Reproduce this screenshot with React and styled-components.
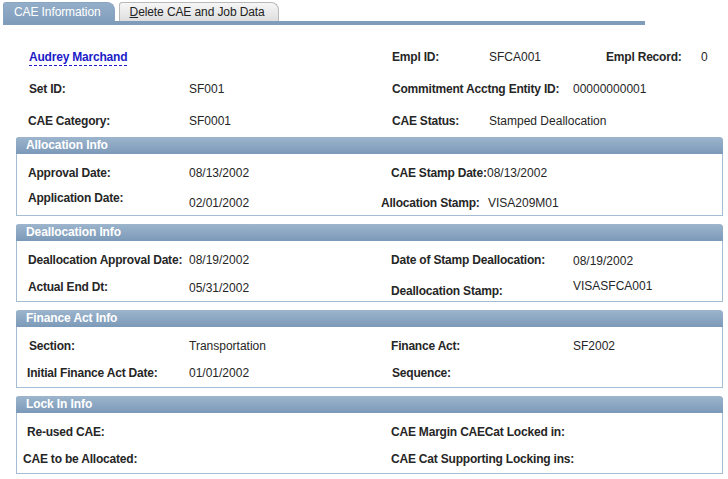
import React from "react";
import styled, { createGlobalStyle } from "styled-components";

const GlobalStyle = createGlobalStyle`
  body {
    margin: 0;
    background: #ffffff;
    font-family: Arial, "Liberation Sans", sans-serif;
    font-size: 12px;
    color: #222;
  }
`;

const Page = styled.div`
  width: 728px;
  height: 479px;
  overflow: hidden;
  background: #fff;
`;

const TabBar = styled.div`
  display: flex;
  align-items: flex-end;
  gap: 4px;
  margin-left: 3px;
  width: 642px;
  height: 21px;
  border-bottom: 4px solid #7f9dbb;
`;

const Tab = styled.div`
  height: 19px;
  box-sizing: border-box;
  padding: 0 13px 0 10px;
  display: flex;
  align-items: center;
  font-size: 12px;
  letter-spacing: -0.1px;
  border-radius: 3px 8px 0 0;
  color: ${(p) => (p.$active ? "#ffffff" : "#222")};
  background: ${(p) =>
    p.$active
      ? "linear-gradient(#93aec9, #829fbd)"
      : "linear-gradient(#f6f6f6, #dedede)"};
  border: 1px solid ${(p) => (p.$active ? "#8aa5c1" : "#b9b9b9")};
  border-bottom: none;
  & u {
    text-decoration: underline;
  }
`;

const Header = styled.div`
  padding: 16px 0 0 29px;
`;

const Row = styled.div`
  display: grid;
  grid-template-columns: ${(p) => p.$cols};
  align-items: center;
  height: ${(p) => p.$h || 27}px;
`;

const Label = styled.div`
  font-weight: bold;
  color: #262626;
  letter-spacing: -0.2px;
  white-space: nowrap;
  margin-left: ${(p) => p.$dx || 0}px;
  margin-top: ${(p) => (p.$dy || 0) * 2}px;
`;

const Value = styled.div`
  color: #262626;
  white-space: nowrap;
  margin-left: ${(p) => p.$dx || 0}px;
  margin-top: ${(p) => (p.$dy || 0) * 2}px;
`;

const NameLink = styled.a`
  font-weight: bold;
  color: #1c1cc8;
  text-decoration: none;
  border-bottom: 1px dashed #1c1cc8;
  padding-bottom: 1px;
  cursor: pointer;
`;

const Sections = styled.div`
  display: flex;
  flex-direction: column;
  gap: 8px;
  margin-left: 16px;
  width: 707px;
`;

const Box = styled.div`
  border: 1px solid #a4bcd4;
  border-top: none;
  border-radius: 3px 4px 0 0;
`;

const BoxTitle = styled.div`
  height: 17px;
  line-height: 17px;
  padding-left: 10px;
  margin: 0 -1px;
  font-weight: bold;
  letter-spacing: -0.1px;
  color: #ffffff;
  background: linear-gradient(#9db5cd, #7b99b8);
  border-radius: 3px 4px 0 0;
`;

const BoxBody = styled.div`
  padding: ${(p) => p.$pt || 5}px 0 ${(p) => p.$pb || 1}px 11px;
`;

const sections = [
  {
    title: "Allocation Info",
    pt: 5,
    pb: 2,
    cols: "161px 202px 96px 1fr",
    rows: [
      [
        { t: "Approval Date:" },
        { t: "08/13/2002" },
        { t: "CAE Stamp Date:" },
        { t: "08/13/2002" },
      ],
      [
        { t: "Application Date:", dy: -2 },
        { t: "02/01/2002", dy: 3 },
        { t: "Allocation Stamp:", dx: -10, dy: 3 },
        { t: "VISA209M01", dx: 1, dy: 3 },
      ],
    ],
  },
  {
    title: "Deallocation Info",
    cols: "161px 202px 182px 1fr",
    rows: [
      [
        { t: "Deallocation Approval Date:" },
        { t: "08/19/2002" },
        { t: "Date of Stamp Deallocation:" },
        { t: "08/19/2002", dy: 1 },
      ],
      [
        { t: "Actual End Dt:" },
        { t: "05/31/2002", dy: 1 },
        { t: "Deallocation Stamp:", dy: 4 },
        { t: "VISASFCA001", dy: -1 },
      ],
    ],
  },
  {
    title: "Finance Act Info",
    cols: "161px 202px 182px 1fr",
    rows: [
      [
        { t: "Section:", dx: 1 },
        { t: "Transportation" },
        { t: "Finance Act:" },
        { t: "SF2002" },
      ],
      [
        { t: "Initial Finance Act Date:", dx: -1 },
        { t: "01/01/2002" },
        { t: "Sequence:", dx: 1 },
        null,
      ],
    ],
  },
  {
    title: "Lock In Info",
    cols: "161px 202px 182px 1fr",
    rows: [
      [{ t: "Re-used CAE:", dx: -1 }, null, { t: "CAE Margin CAECat Locked in:" }, null],
      [{ t: "CAE to be Allocated:", dx: -5 }, null, { t: "CAE Cat Supporting Locking ins:" }, null],
    ],
  },
];

function Cells({ row }) {
  return row.map((c, i) => {
    if (!c) return <span key={i} />;
    const Cell = i % 2 === 0 ? Label : Value;
    return (
      <Cell key={i} $dx={c.dx} $dy={c.dy}>
        {c.t}
      </Cell>
    );
  });
}

export default function App() {
  return (
    <Page>
      <GlobalStyle />
      <TabBar>
        <Tab $active>CAE Information</Tab>
        <Tab>
          <span>
            <u>D</u>elete CAE and Job Data
          </span>
        </Tab>
      </TabBar>

      <Header>
        <Row $h={32} $cols="160px 203px 97px 117px 95px 1fr">
          <Label>
            <NameLink>Audrey Marchand</NameLink>
          </Label>
          <span />
          <Label>Empl ID:</Label>
          <Value>SFCA001</Value>
          <Label>Empl Record:</Label>
          <Value>0</Value>
        </Row>
        <Row $h={32} $cols="160px 203px 181px 1fr">
          <Label>Set ID:</Label>
          <Value>SF001</Value>
          <Label>Commitment Acctng Entity ID:</Label>
          <Value>00000000001</Value>
        </Row>
        <Row $h={32} $cols="160px 203px 97px 1fr">
          <Label $dx={-1}>CAE Category:</Label>
          <Value>SF0001</Value>
          <Label>CAE Status:</Label>
          <Value>Stamped Deallocation</Value>
        </Row>
      </Header>

      <Sections>
        {sections.map((s) => (
          <Box key={s.title}>
            <BoxTitle>{s.title}</BoxTitle>
            <BoxBody $pt={s.pt} $pb={s.pb}>
              {s.rows.map((r, i) => (
                <Row key={i} $cols={s.cols}>
                  <Cells row={r} />
                </Row>
              ))}
            </BoxBody>
          </Box>
        ))}
      </Sections>
    </Page>
  );
}
